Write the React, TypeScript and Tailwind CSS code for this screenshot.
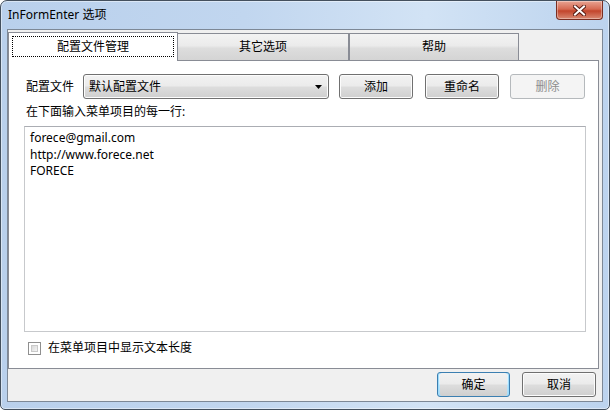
const font = { fontFamily: '"Noto Sans", "Noto Sans CJK SC", sans-serif' };

function Btn({ label, w, disabled }: { label: string; w: string; disabled?: boolean }) {
  return (
    <div
      className={`${w} h-[25px] flex items-center justify-center rounded-[3px] border text-[12px] ${
        disabled
          ? "border-[#b5b9bc] bg-[#f4f4f4] text-[#8d8d8d]"
          : "border-[#707070] bg-[linear-gradient(#f2f2f2_0%,#ebebeb_48%,#dddddd_52%,#cfcfcf_100%)] text-black shadow-[inset_0_0_0_1px_#fcfcfc]"
      }`}
    >
      {label}
    </div>
  );
}

export default function App() {
  return (
    <div className="w-[610px] h-[410px] bg-white text-black" style={font}>
      <div className="w-full h-full flex flex-col rounded-t-[7px] rounded-b-[5px] border border-[#44505e] bg-[linear-gradient(90deg,#b9d0ec_0%,#c1d6ef_40%,#d2e3f5_70%,#bcd3ee_100%)] shadow-[inset_0_0_0_1px_rgba(255,255,255,0.45)]">
        {/* title bar */}
        <div className="h-[28px] flex justify-between pl-[7px] pr-[6px]">
          <div className="text-[12px] leading-[28px] text-black">InFormEnter 选项</div>
          <div className="w-[47px] h-[19px] flex items-center justify-center rounded-b-[4px] border border-t-0 border-[#7a2e22] bg-[linear-gradient(#e8a493_0%,#d56a53_45%,#c2452c_55%,#d98a73_100%)] shadow-[inset_0_0_0_1px_rgba(255,255,255,0.35)]">
            <svg width="13" height="11" viewBox="0 0 13 11">
              <path d="M2 1.5 L11 9.5 M11 1.5 L2 9.5" stroke="#5a1d14" strokeWidth="4" strokeLinecap="square" />
              <path d="M2 1.5 L11 9.5 M11 1.5 L2 9.5" stroke="#ffffff" strokeWidth="2" strokeLinecap="square" />
            </svg>
          </div>
        </div>

        {/* client area */}
        <div className="mx-[6px] mb-[7px] flex-1 flex flex-col border border-[#7d8896] bg-[#f0f0f0]">
          {/* tabs */}
          <div className="h-[30px] flex items-end relative z-10">
            <div className="w-[170px] h-[29px] -mb-px flex border border-b-0 border-[#898c95] bg-white px-[3px] pt-[3px] pb-[4px]">
              <div className="flex-1 flex items-center justify-center border border-dotted border-black text-[12px]">
                配置文件管理
              </div>
            </div>
            <div className="w-[171px] h-[27px] flex items-center justify-center border border-l-0 border-b-0 border-[#898c95] bg-[linear-gradient(#f3f3f3_0%,#ebebeb_45%,#dddddd_55%,#d4d4d4_100%)] text-[12px]">
              其它选项
            </div>
            <div className="w-[170px] h-[27px] flex items-center justify-center border border-b-0 border-[#898c95] bg-[linear-gradient(#f3f3f3_0%,#ebebeb_45%,#dddddd_55%,#d4d4d4_100%)] text-[12px]">
              帮助
            </div>
          </div>

          {/* panel */}
          <div className="h-[309px] mr-[3px] border border-[#898c95] bg-white flex flex-col">
            <div className="mt-[13px] flex items-center h-[25px] pl-[17px]">
              <span className="text-[12px] w-[57px]">配置文件</span>
              <div className="w-[246px] h-[25px] flex items-center justify-between rounded-[3px] border border-[#707070] bg-[linear-gradient(#f2f2f2_0%,#ebebeb_48%,#dddddd_52%,#cfcfcf_100%)] shadow-[inset_0_0_0_1px_#fcfcfc] pl-[5px] pr-[6px] text-[12px]">
                <span>默认配置文件</span>
                <svg width="7" height="4" viewBox="0 0 7 4">
                  <polygon points="0,0 7,0 3.5,4" fill="#000" />
                </svg>
              </div>
              <div className="ml-[10px]">
                <Btn label="添加" w="w-[74px]" />
              </div>
              <div className="ml-[12px]">
                <Btn label="重命名" w="w-[74px]" />
              </div>
              <div className="ml-[11px]">
                <Btn label="删除" w="w-[75px]" disabled />
              </div>
            </div>

            <div className="mt-[5px] pl-[17px] text-[12px] leading-[16px]">在下面输入菜单项目的每一行:</div>

            <div className="mt-[6px] ml-[15px] w-[562px] h-[206px] border border-[#c7c9cc] border-t-[#abadb3] pt-[3px] pl-[5px] text-[12px] leading-[16.5px]">
              <div>forece@gmail.com</div>
              <div>http://www.forece.net</div>
              <div>FORECE</div>
            </div>

            <div className="mt-[8px] ml-[19px] flex items-center gap-[7px]">
              <div className="w-[13px] h-[13px] border border-[#8f8f8f] bg-white p-[2px]">
                <div className="w-full h-full bg-[linear-gradient(135deg,#d9d9d9,#f4f4f4)] border border-[#c9c9c9]" />
              </div>
              <span className="text-[12px] leading-[16px]">在菜单项目中显示文本长度</span>
            </div>
          </div>

          {/* bottom bar */}
          <div className="flex-1 flex items-center justify-end gap-[12px] pr-[6px] pb-px">
            <div className="w-[73px] h-[25px] flex items-center justify-center rounded-[3px] border border-[#3c7fb1] bg-[linear-gradient(#eaf6fd_0%,#d9f0fc_48%,#bee6fd_52%,#a7d9f5_100%)] shadow-[inset_0_0_0_1px_#9fdcfa] text-[12px]">
              <div className="w-full h-full flex items-center justify-center rounded-[2px] bg-[linear-gradient(#f2f2f2_0%,#ebebeb_48%,#dddddd_52%,#cfcfcf_100%)] m-[2px]">
                确定
              </div>
            </div>
            <Btn label="取消" w="w-[74px]" />
          </div>
        </div>
      </div>
    </div>
  );
}
